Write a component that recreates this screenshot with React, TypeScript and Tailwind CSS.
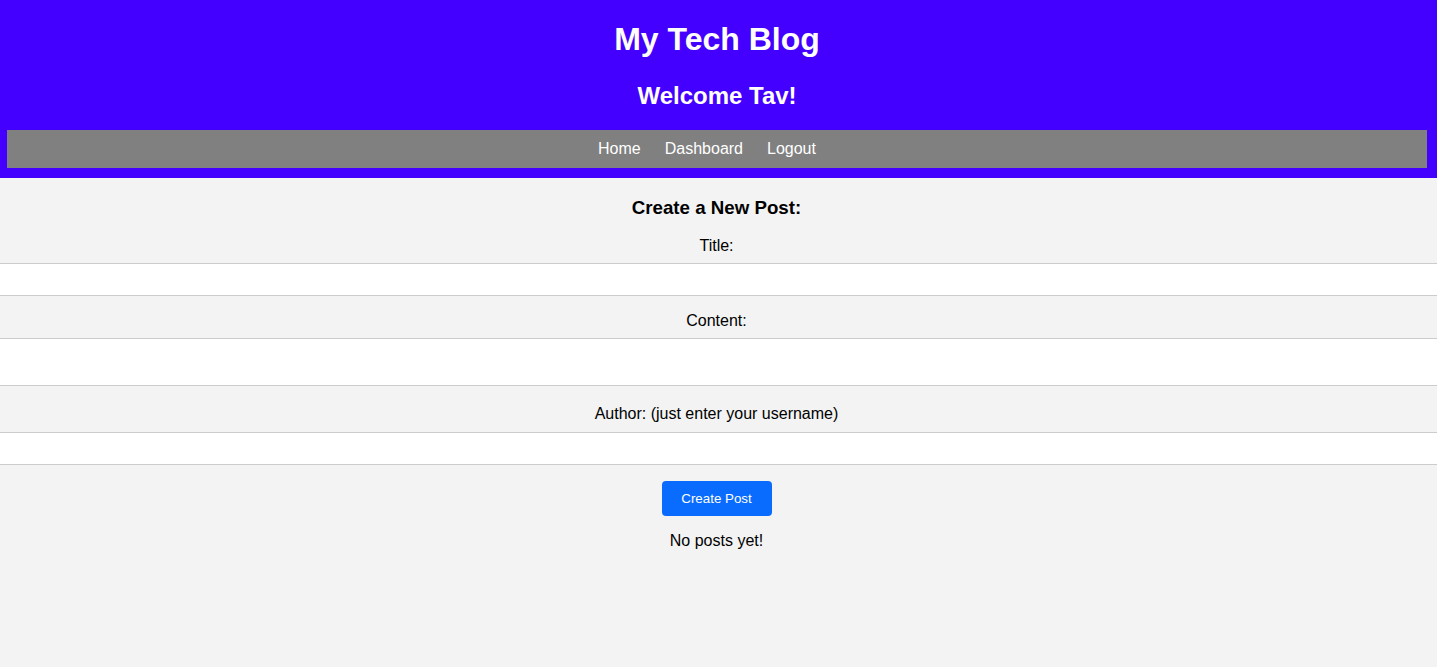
export default function App() {
  return (
    <div className="min-h-screen bg-[#f3f3f3] text-black font-['Liberation_Sans',Arial,sans-serif]">
      <header className="bg-[#4400ff] text-white text-center pt-[21px] pb-[10px] pl-[7px] pr-[10px]">
        <h1 className="text-[32px] leading-[37px] font-bold">My Tech Blog</h1>
        <h2 className="mt-[24px] text-[24px] leading-[28px] font-bold">Welcome Tav!</h2>
        <nav className="mt-[20px] h-[38px] bg-[#808080] flex items-center justify-center pr-[20px] text-[16px] leading-[18px]">
          <a href="#" className="mx-3">Home</a>
          <a href="#" className="mx-3">Dashboard</a>
          <a href="#" className="mx-3">Logout</a>
        </nav>
      </header>

      <main className="pt-[19px] text-center">
        <h3 className="pr-[4px] text-[18.72px] leading-[22px] font-bold">Create a New Post:</h3>
        <form className="mt-[18px] flex flex-col items-center">
          <label htmlFor="title" className="block pr-[4px] text-[16px] leading-[18px]">Title:</label>
          <input
            id="title"
            className="block mt-[8px] w-full h-[33px] bg-white border-y border-x-0 border-[#cccccc] px-2 outline-none"
          />

          <label htmlFor="content" className="block mt-[16px] pr-[4px] text-[16px] leading-[18px]">Content:</label>
          <textarea
            id="content"
            className="block mt-[8px] w-full h-[48px] bg-white border-y border-x-0 border-[#cccccc] px-2 resize-none outline-none"
          />

          <label htmlFor="author" className="block mt-[19px] pr-[4px] text-[16px] leading-[18px]">
            Author: (just enter your username)
          </label>
          <input
            id="author"
            className="block mt-[9px] w-full h-[33px] bg-white border-y border-x-0 border-[#cccccc] px-2 outline-none"
          />

          <button
            type="submit"
            className="mt-[16px] mr-[4px] w-[110px] h-[35px] rounded-[4px] bg-[#0a6cff] text-white text-[13.33px]"
          >
            Create Post
          </button>
        </form>
        <p className="mt-[16px] pr-[4px] text-[16px] leading-[18px]">No posts yet!</p>
      </main>
    </div>
  );
}
